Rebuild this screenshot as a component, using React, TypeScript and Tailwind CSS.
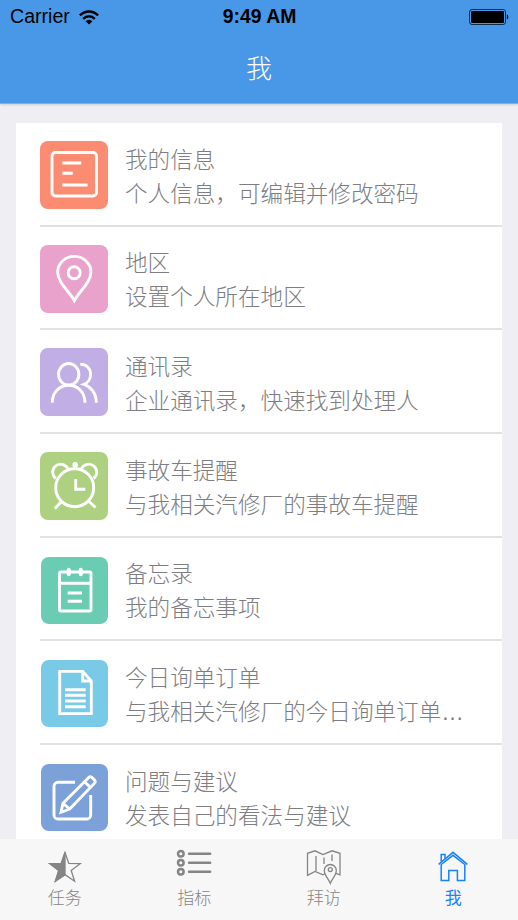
import React from "react";

type MenuItem = {
  title: string;
  desc: string;
  color: string;
  inset?: number;
  icon: React.ReactNode;
};

type Tab = {
  label: string;
  active?: boolean;
  icon: React.ReactNode;
};

const menuItems: MenuItem[] = [
  {
    title: "我的信息",
    desc: "个人信息，可编辑并修改密码",
    color: "#fb8c71",
    icon: (
      <>
        <rect x="12" y="11.5" width="44.5" height="43.5" rx="3.5" />
        <path d="M22.3 22h19M22.3 32.3h10.4M22.3 44h25.3" />
      </>
    ),
  },
  {
    title: "地区",
    desc: "设置个人所在地区",
    color: "#e8a2cb",
    icon: (
      <>
        <path d="M34.3 55.5C30 47 17.7 38 17.7 27a16.6 15.6 0 0 1 33.2 0c0 11-12.3 20-16.6 28.5z" />
        <circle cx="34.2" cy="27.7" r="6" />
      </>
    ),
  },
  {
    title: "通讯录",
    desc: "企业通讯录，快速找到处理人",
    color: "#c0aee4",
    icon: (
      <>
        <ellipse cx="28.7" cy="26.3" rx="10.2" ry="10.8" />
        <path d="M12.2 54.7c0-10 7-17.5 16.5-17.5s16.3 7.5 16.3 17.5" />
        <path d="M40.3 16.2c6 0 10.3 4.2 10.3 10.2 0 4.5-2.8 8.5-6.6 10 7 2.3 12.3 9 12.3 18.3" />
      </>
    ),
  },
  {
    title: "事故车提醒",
    desc: "与我相关汽修厂的事故车提醒",
    color: "#add181",
    icon: (
      <>
        <circle cx="34.7" cy="35.7" r="19" />
        <path d="M15.8 26.5a8 8 0 1 1 12.5-8.8M53.6 26.5a8 8 0 1 0-12.5-8.8" />
        <path d="M22 49l-7.3 7.7M48.5 49l7 6.5M35.7 27v10.2h9.6M35.2 12v4" />
        <circle cx="35.2" cy="12.8" r="1.4" />
      </>
    ),
  },
  {
    title: "备忘录",
    desc: "我的备忘事项",
    color: "#6acdb3",
    inset: 1,
    icon: (
      <>
        <rect x="19.5" y="16" width="31.5" height="39" rx="1.5" />
        <path d="M19.5 27.3H51M27.7 37H42M27.7 45.3H42" />
        <path strokeWidth="4" strokeLinecap="round" d="M28.7 13.8v4.5M40.8 13.8v4.5" />
      </>
    ),
  },
  {
    title: "今日询单订单",
    desc: "与我相关汽修厂的今日询单订单…",
    color: "#79cae7",
    inset: 1,
    icon: (
      <>
        <path d="M19.7 12.4h23l8.6 9.6v32.6H19.7z" />
        <path d="M42.7 12.4V22h8.6M25 30.7h20.7M25 36.3h20.7M25 42h20.7M25 47.7h20.7" />
      </>
    ),
  },
  {
    title: "问题与建议",
    desc: "发表自己的看法与建议",
    color: "#7ca1d9",
    inset: 1,
    icon: (
      <>
        <path d="M35 19.3H18a4 4 0 0 0-4 4V52a4 4 0 0 0 4 4h28.7a4 4 0 0 0 4-4V32" />
        <path d="M21 49.3l2-9 26-26c1.8-1.8 7.6 3.3 5.8 5.6L29.7 46z" />
        <path d="M44.5 18.8l6 5.6M23 40.3l6.7 5.7" />
      </>
    ),
  },
];

const tabs: Tab[] = [
  {
    label: "任务",
    icon: (
      <>
        <path d="M18 3.5l3.8 10.9 11.4.3-9 6.8 3.4 10.7-9.6-6.6-9.6 6.6 3.4-10.7-9-6.8 11.4-.3z" />
        <path fill="currentColor" d="M18 3.5v22.1l-9.6 6.6 3.4-10.7-9-6.8 11.4-.3z" />
      </>
    ),
  },
  {
    label: "指标",
    icon: (
      <>
        <g strokeWidth="2.5">
          <circle cx="4.8" cy="4.8" r="2.8" />
          <circle cx="4.8" cy="13.8" r="2.8" />
          <circle cx="4.8" cy="22.8" r="2.8" />
        </g>
        <path strokeWidth="2.4" strokeLinecap="round" d="M13 4.8h21.2M13 13.8h21.2M13 22.8h21.2" />
      </>
    ),
  },
  {
    label: "拜访",
    icon: (
      <>
        <path d="M19 24.8l-2 1.1-8-3.5-7.5 4V4.3L9 1.8l8 3.8 9-3.8 8 2.5v21.5l-4-1.5" />
        <path d="M10 7v15M18 8.5V15M26 5.5V12" />
        <path d="M24.3 34.3c-1.6-4.6-6-7.6-6-12.8a6 6 0 0 1 12 0c0 5.2-4.4 8.2-6 12.8z" />
        <circle cx="24.3" cy="20.6" r="2" />
      </>
    ),
  },
  {
    label: "我",
    active: true,
    icon: (
      <g strokeWidth="1.5">
        <path d="M3.6 15.3L18 3.3l14.4 12" />
        <path d="M6.2 15.5v16h7.6V21.5h8.6v10h7.4v-16L18 6.3z" />
        <path d="M6.2 12.5v-7H10v4" />
      </g>
    ),
  },
];

const StatusBar = () => (
  <div className="grid grid-cols-3 items-center h-[34px] pl-[10px] pr-[9px] text-black">
    <div className="flex items-center gap-[9px]">
      <span className="text-[19.6px] leading-none">Carrier</span>
      <svg className="w-5 h-[15px]" viewBox="0 0 20 15" fill="none" stroke="currentColor" strokeWidth="2.5">
        <path d="M.9 5.4c5.2-5.2 13-5.2 18.2 0M4.2 8.8c3.4-3.3 8.2-3.3 11.6 0" />
        <path fill="currentColor" stroke="none" d="M6.5 11.2c2.2-2 4.8-2 7 0L10 14.6z" />
      </svg>
    </div>
    <span className="text-center text-[19.4px] leading-none font-bold">9:49 AM</span>
    <svg className="w-10 h-4 justify-self-end" viewBox="0 0 40 16">
      <rect x=".5" y=".5" width="36" height="15" rx="2.5" fill="none" stroke="#102c4c" />
      <rect x="2" y="2" width="33" height="12" rx="1" />
      <path d="M37.8 5.5c2 .5 2 4.5 0 5z" />
    </svg>
  </div>
);

const MenuRow = ({ item }: { item: MenuItem }) => {
  const inset = item.inset || 0;

  return (
    <li className="flex items-start gap-[17px] shrink-0 h-[103.7px] ml-6 pt-[18px] border-b-2 border-[#e1e1e4]">
      <svg className="w-[68px] h-[68px] shrink-0" viewBox="0 0 68 68">
        <rect x={inset} y={inset} width={68 - inset} height={68 - inset} rx="8" fill={item.color} />
        <g fill="none" stroke="#fff" strokeWidth="2.9">
          {item.icon}
        </g>
      </svg>
      <div className="pt-[2.5px] text-[22.6px] leading-[34px] text-[#7d7d82] whitespace-nowrap">
        <h3>{item.title}</h3>
        <p>{item.desc}</p>
      </div>
    </li>
  );
};

const App = () => {
  return (
    <div className="flex flex-col h-[920px] w-full overflow-hidden bg-[#eeeef3] font-light font-['Liberation_Sans','Noto_Sans_CJK_SC',sans-serif]">
      <header className="relative h-[104px] shrink-0 bg-[#4997e7] border-b border-[#83aee0] shadow-[0_1px_2px_#00000022]">
        <StatusBar />
        <h1 className="text-center text-[26px] leading-[70px] text-white">我</h1>
      </header>

      <main className="flex-1 min-h-0 overflow-hidden px-4 pt-[19px]">
        <ul className="flex flex-col bg-white">
          {menuItems.map((item) => (
            <MenuRow key={item.title} item={item} />
          ))}
        </ul>
      </main>

      <nav className="grid grid-cols-4 h-[81px] shrink-0 bg-[#f7f7f7]">
        {tabs.map((tab) => (
          <a
            key={tab.label}
            className={`flex flex-col items-center gap-[2px] pt-[10px] ${tab.active ? "font-normal text-[#1683fb]" : "text-[#858585]"}`}
          >
            <svg className="w-9 h-9" viewBox="0 0 36 36" fill="none" stroke="currentColor" strokeWidth="1.3">
              {tab.icon}
            </svg>
            <span className="text-[17px] leading-6">{tab.label}</span>
          </a>
        ))}
      </nav>
    </div>
  );
};

export default App;
